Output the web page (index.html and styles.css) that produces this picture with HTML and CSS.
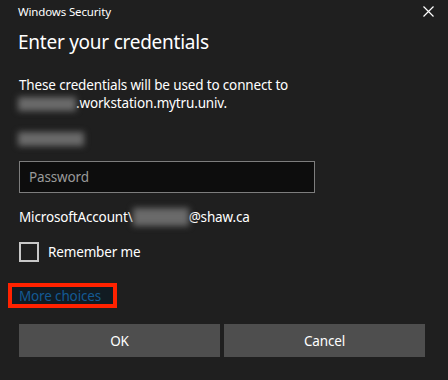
FILE: index.html
```html
<!DOCTYPE html>
<html>
<head>
<meta charset="utf-8">
<link rel="stylesheet" href="styles.css">
</head>
<body>
<div class="dialog">
  <div class="titlebar">
    <span class="title">Windows Security</span>
    <svg class="close" width="11" height="11" viewBox="0 0 11 11"><path d="M0.5 0.5 L10.5 10.5 M10.5 0.5 L0.5 10.5" stroke="#ffffff" stroke-width="1.2" fill="none"/></svg>
  </div>
  <h1 class="heading">Enter your credentials</h1>
  <p class="desc">These credentials will be used to connect to<br><span class="blur b1"></span>.workstation.mytru.univ.</p>
  <div class="blurrow"><span class="blur b2"></span></div>
  <div class="input"><span class="placeholder">Password</span></div>
  <div class="account">MicrosoftAccount\<span class="blur b3"></span>@shaw.ca</div>
  <label class="remember"><span class="check"></span><span>Remember me</span></label>
  <div class="more"><span class="morelink">More choices</span></div>
  <div class="buttons">
    <div class="btn">OK</div>
    <div class="btn">Cancel</div>
  </div>
</div>
</body>
</html>
```
FILE: styles.css
```css
html, body {
  margin: 0;
  padding: 0;
  background: #1f1f1f;
}
.dialog {
  width: 448px;
  height: 380px;
  background: #1f1f1f;
  color: #ffffff;
  font-family: "Segoe UI", "Noto Sans", sans-serif;
  font-size: 13.5px;
  letter-spacing: -0.15px;
  display: flex;
  flex-direction: column;
  box-sizing: border-box;
  padding: 0 23px 0 19px;
}
.titlebar {
  height: 22px;
  display: flex;
  align-items: center;
  justify-content: space-between;
  margin-left: -1px;
  margin-right: -9px;
}
.title {
  font-size: 11.5px;
  color: #ffffff;
}
.close { display: block; }
.heading {
  margin: 6px 0 0 -1px;
  font-size: 19px;
  letter-spacing: -0.25px;
  font-weight: 400;
  line-height: 28px;
}
.desc {
  margin: 20px 0 0 0;
  line-height: 18px;
}
.blur {
  display: inline-block;
  background: #6a6a6a;
  filter: blur(3px);
  vertical-align: middle;
}
.b1 { width: 58px; height: 14px; margin-left: -1px; }
.b2 { width: 66px; height: 14px; margin-left: -1px; }
.b3 { width: 56px; height: 18px; }
.blurrow {
  margin-top: 17px;
  height: 20px;
  display: flex;
  align-items: center;
}
.input {
  margin-top: 12px;
  width: 296px;
  height: 32px;
  box-sizing: border-box;
  border: 1px solid #7d7d7d;
  background: #0d0d0d;
  display: flex;
  align-items: center;
  padding-left: 9px;
}
.placeholder {
  color: #9a9a9a;
}
.account {
  margin-top: 14px;
  line-height: 20px;
  display: flex;
  align-items: center;
}
.remember {
  margin-top: 15px;
  display: flex;
  align-items: center;
}
.check {
  width: 20px;
  height: 20px;
  box-sizing: border-box;
  border: 2px solid #c8c8c8;
  margin-right: 9px;
}
.more {
  margin-top: 21px;
  margin-left: -11px;
  align-self: flex-start;
  border: 4px solid #ff2200;
  background: #111b22;
  padding: 0 12px 0 7px;
  height: 25px;
  box-sizing: border-box;
  display: flex;
  align-items: center;
}
.morelink {
  color: #145a94;
}
.buttons {
  margin-top: 16px;
  display: grid;
  grid-template-columns: 1fr 1fr;
  gap: 4px;
}
.btn {
  height: 33px;
  background: #4e4e4e;
  display: flex;
  align-items: center;
  justify-content: center;
  color: #ffffff;
}
```
